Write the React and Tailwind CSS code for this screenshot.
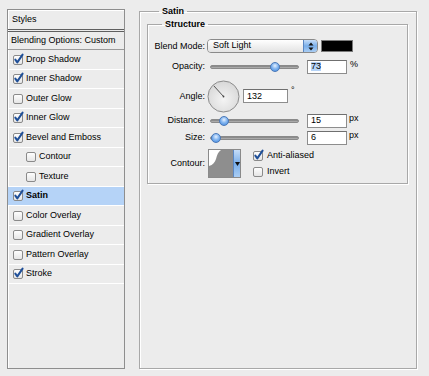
import React from 'react'

function Box({ on }) {
  return (
    <svg width="11" height="11" viewBox="0 0 11 11" className="shrink-0 overflow-visible">
      <defs>
        <linearGradient id="cbg" x1="0" y1="0" x2="0" y2="1">
          <stop offset="0" stopColor="#ffffff" />
          <stop offset="1" stopColor="#e4e4e4" />
        </linearGradient>
      </defs>
      <rect x="0.5" y="1.5" width="9" height="9" rx="1.5" fill="url(#cbg)" stroke="#8a8a8a" />
      {on && (
        <path
          d="M2.3 5.6 L4.3 8.4 L9.6 0.6"
          fill="none"
          stroke="#1f4f98"
          strokeWidth="2"
          strokeLinecap="round"
          strokeLinejoin="round"
        />
      )}
    </svg>
  )
}

const styles = [
  { name: 'Drop Shadow', on: true },
  { name: 'Inner Shadow', on: true },
  { name: 'Outer Glow', on: false },
  { name: 'Inner Glow', on: true },
  { name: 'Bevel and Emboss', on: true },
  { name: 'Contour', on: false, sub: true },
  { name: 'Texture', on: false, sub: true },
  { name: 'Satin', on: true, active: true },
  { name: 'Color Overlay', on: false },
  { name: 'Gradient Overlay', on: false },
  { name: 'Pattern Overlay', on: false },
  { name: 'Stroke', on: true },
]

function Slider({ pos }) {
  return (
    <div className="relative h-[10px] w-[89px] flex items-center">
      <div className="h-[4px] w-full rounded-full bg-gradient-to-b from-[#7d7d7d] to-[#b9b9b9] border border-[#8a8a8a]" />
      <div
        className="absolute top-0 h-[10px] w-[10px] rounded-full border border-[#4a78b8] bg-[radial-gradient(circle_at_50%_35%,#e6f1ff_0%,#86b7f0_45%,#3f86dd_100%)]"
        style={{ left: pos }}
      />
    </div>
  )
}

function Field({ value, w = 'w-[40px]', selected }) {
  return (
    <div className={`${w} h-[14px] flex items-center border border-[#8d8d8d] border-t-[#6f6f6f] bg-white pl-[3px] text-[9px] leading-none`}>
      {selected ? <span className="bg-[#b5d3f7]">{value}</span> : value}
    </div>
  )
}

function Label({ children }) {
  return <div className="w-[57px] shrink-0 text-right text-[9px] leading-none">{children}</div>
}

export default function App() {
  return (
    <div className="w-[429px] h-[376px] bg-[#ececec] flex pl-[7px] font-['Liberation_Sans',Arial,sans-serif] text-black">
      <div className="mt-[9px] w-[118px] h-[360px] border border-[#8e8e8e] shadow-[inset_1px_1px_0_#fff] flex flex-col">
        <div className="h-[19px] flex items-center pl-[4px] text-[9px]">Styles</div>
        <div className="h-[3px] border-y border-[#5f5f5f]" />
        <div className="h-[18px] flex items-center pl-[3px] text-[9px] border-b border-[#9a9a9a]">
          Blending Options: Custom
        </div>
        {styles.map((s) => (
          <div
            key={s.name}
            className={`h-[19.5px] flex items-center gap-[2px] text-[9px] border-b border-white ${
              s.sub ? 'pl-[18px]' : 'pl-[5px]'
            } ${s.active ? 'bg-[#b5d3f7]' : ''}`}
          >
            <Box on={s.on} />
            <span className={s.active ? 'font-bold' : ''}>{s.name}</span>
          </div>
        ))}
      </div>

      <fieldset className="ml-[14px] mt-[5px] w-[278px] h-[364px] border border-[#a8a8a8] shadow-[1px_1px_0_#fff,inset_1px_1px_0_#fff] px-[7px]">
        <legend className="ml-[12px] px-[3px] text-[9px] leading-[12px] font-bold">Satin</legend>
        <fieldset className="mt-[1px] w-[261px] border border-[#a8a8a8] shadow-[1px_1px_0_#fff,inset_1px_1px_0_#fff] pt-[9px] pb-[5px]">
          <legend className="ml-[14px] px-[3px] text-[9px] leading-[12px] font-bold">Structure</legend>

          <div className="flex items-center h-[14px]">
            <Label>Blend Mode:</Label>
            <div className="ml-[2px] w-[111px] h-[14px] flex rounded-[4px] border border-[#8a8a8a] overflow-hidden">
              <div className="flex-1 flex items-center pl-[5px] text-[9px] bg-gradient-to-b from-white to-[#e3e3e3]">
                Soft Light
              </div>
              <div className="w-[14px] flex items-center justify-center border-l border-[#5a86c2] bg-gradient-to-b from-[#c6ddf8] via-[#79aee9] to-[#a9cdf4]">
                <svg width="6" height="9" viewBox="0 0 6 9">
                  <path d="M3 0.5 L5.5 3.5 L0.5 3.5 Z M3 8.5 L5.5 5.5 L0.5 5.5 Z" fill="#111" />
                </svg>
              </div>
            </div>
            <div className="ml-[3px] w-[32px] h-[12px] bg-black border border-[#7a7a7a]" />
          </div>

          <div className="mt-[7px] flex items-center h-[13px]">
            <Label>Opacity:</Label>
            <div className="ml-[5px]">
              <Slider pos={60} />
            </div>
            <div className="ml-[8px]">
              <Field value="73" selected />
            </div>
            <span className="ml-[3px] text-[9px] leading-none self-start">%</span>
          </div>

          <div className="mt-[7px] flex items-center h-[32px]">
            <Label>Angle:</Label>
            <svg width="33" height="33" viewBox="0 0 33 33" className="ml-[2px]">
              <defs>
                <radialGradient id="dial" cx="0.5" cy="0.6" r="0.6">
                  <stop offset="0" stopColor="#f4f4f4" />
                  <stop offset="1" stopColor="#d7d7d7" />
                </radialGradient>
              </defs>
              <circle cx="16.5" cy="16.5" r="15.5" fill="url(#dial)" stroke="#8c8c8c" />
              <line x1="16.5" y1="16.5" x2="6.8" y2="5.8" stroke="#555" strokeWidth="1" />
              <circle cx="16.5" cy="16.5" r="0.9" fill="#444" />
            </svg>
            <div className="ml-[3px]">
              <Field value="132" w="w-[45px]" />
            </div>
            <span className="ml-[3px] text-[9px] leading-none self-start mt-[6px]">°</span>
          </div>

          <div className="mt-[2px] flex items-center h-[13px]">
            <Label>Distance:</Label>
            <div className="ml-[5px]">
              <Slider pos={9} />
            </div>
            <div className="ml-[8px]">
              <Field value="15" />
            </div>
            <span className="ml-[2px] text-[9px] leading-none self-start">px</span>
          </div>

          <div className="mt-[4px] flex items-center h-[13px]">
            <Label>Size:</Label>
            <div className="ml-[5px]">
              <Slider pos={1} />
            </div>
            <div className="ml-[8px]">
              <Field value="6" />
            </div>
            <span className="ml-[2px] text-[9px] leading-none self-start">px</span>
          </div>

          <div className="mt-[5px] flex items-start h-[29px]">
            <div className="mt-[10px]">
              <Label>Contour:</Label>
            </div>
            <div className="ml-[3px] w-[33px] h-[29px] flex border border-[#8a8a8a]">
              <svg width="24" height="27" viewBox="0 0 24 27" className="bg-white">
                <path d="M0 27 L0 16 C4 15 6 12 7 9 C8 5 9 2 12 0 L24 0 L24 27 Z" fill="#8e8e8e" />
              </svg>
              <div className="flex-1 flex items-center justify-center border-l border-[#5a86c2] bg-gradient-to-b from-[#c6ddf8] via-[#79aee9] to-[#a9cdf4]">
                <svg width="5" height="4" viewBox="0 0 5 4">
                  <path d="M0 0 L5 0 L2.5 4 Z" fill="#111" />
                </svg>
              </div>
            </div>
            <div className="ml-[12px] flex flex-col gap-[5px] pt-[1px]">
              <div className="flex items-center gap-[3px] text-[9px] leading-none">
                <Box on />
                <span>Anti-aliased</span>
              </div>
              <div className="flex items-center gap-[3px] text-[9px] leading-none">
                <Box on={false} />
                <span>Invert</span>
              </div>
            </div>
          </div>
        </fieldset>
      </fieldset>
    </div>
  )
}
